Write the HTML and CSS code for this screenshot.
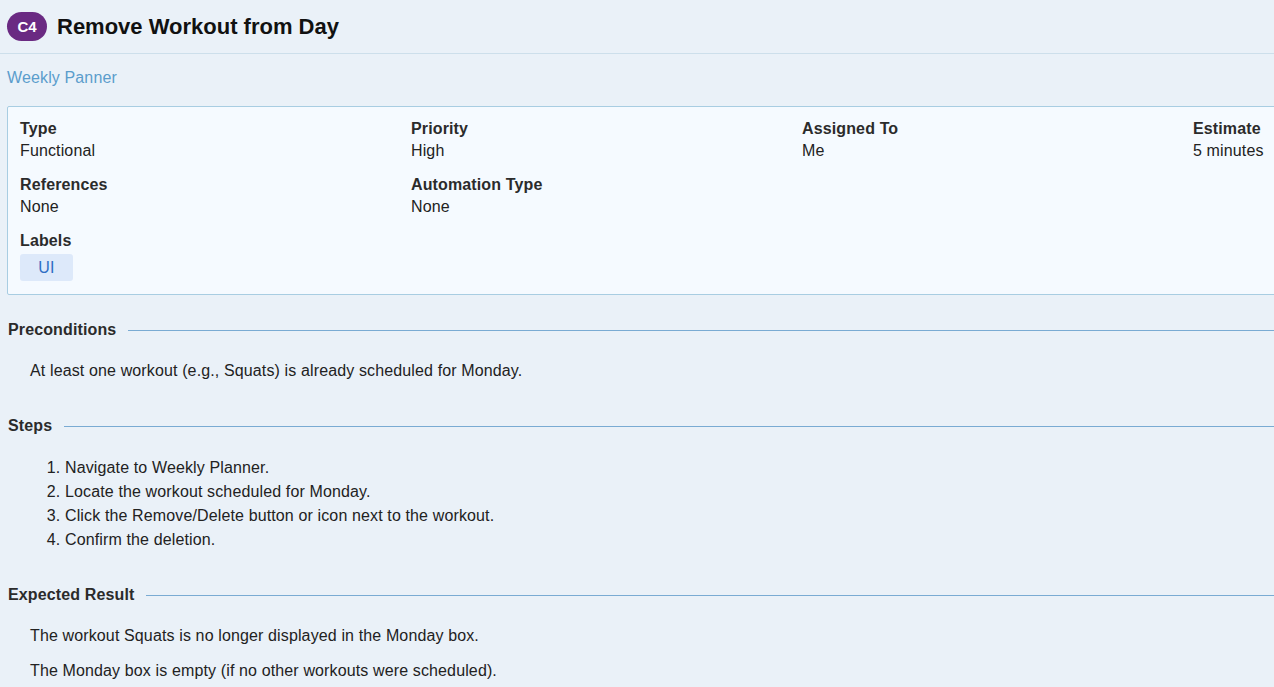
FILE: index.html
```html
<!DOCTYPE html>
<html>
<head>
<meta charset="utf-8">
<link rel="stylesheet" href="styles.css">
</head>
<body>
<div class="page">
  <header class="header">
    <span class="badge">C4</span>
    <h1 class="title">Remove Workout from Day</h1>
  </header>
  <div class="crumb">Weekly Panner</div>
  <div class="info">
    <div class="field"><div class="label">Type</div><div class="value">Functional</div></div>
    <div class="field"><div class="label">Priority</div><div class="value">High</div></div>
    <div class="field"><div class="label">Assigned To</div><div class="value">Me</div></div>
    <div class="field"><div class="label">Estimate</div><div class="value">5 minutes</div></div>
    <div class="field"><div class="label">References</div><div class="value">None</div></div>
    <div class="field"><div class="label">Automation Type</div><div class="value">None</div></div>
    <div class="field"></div>
    <div class="field"></div>
    <div class="field"><div class="label">Labels</div><div class="tags"><span class="tag">UI</span></div></div>
  </div>

  <section class="section">
    <h2 class="sec-title"><span>Preconditions</span></h2>
    <p class="para">At least one workout (e.g., Squats) is already scheduled for Monday.</p>
  </section>

  <section class="section">
    <h2 class="sec-title"><span>Steps</span></h2>
    <ol class="steps">
      <li>Navigate to Weekly Planner.</li>
      <li>Locate the workout scheduled for Monday.</li>
      <li>Click the Remove/Delete button or icon next to the workout.</li>
      <li>Confirm the deletion.</li>
    </ol>
  </section>

  <section class="section">
    <h2 class="sec-title"><span>Expected Result</span></h2>
    <p class="para">The workout Squats is no longer displayed in the Monday box.</p>
    <p class="para">The Monday box is empty (if no other workouts were scheduled).</p>
  </section>
</div>
</body>
</html>
```

FILE: styles.css
```css
html, body {
  margin: 0;
  padding: 0;
  overflow: hidden;
  background: #eaf1f8;
}
body {
  font-family: "Liberation Sans", Arial, sans-serif;
  font-size: 16px;
  color: #222;
  letter-spacing: 0.13px;
}
.page {
  width: 1600px;
}
.header {
  display: flex;
  align-items: center;
  gap: 10px;
  padding: 12px 7px 12px;
  border-bottom: 1px solid #cddfeb;
}
.badge {
  display: inline-flex;
  align-items: center;
  justify-content: center;
  width: 40px;
  height: 29px;
  border-radius: 15px;
  background: #6a2a82;
  color: #fff;
  font-weight: bold;
  font-size: 15px;
  letter-spacing: 0;
}
.title {
  margin: 0;
  font-size: 22px;
  font-weight: bold;
  color: #111;
  letter-spacing: 0;
}
.crumb {
  padding: 15px 7px 0;
  line-height: 18px;
  color: #5b9dcc;
}
.info {
  margin: 19px 7px 0;
  padding: 11px 12px 13px;
  background: #f5faff;
  border: 1px solid #a8cde2;
  border-radius: 2px;
  display: grid;
  grid-template-columns: repeat(4, 391px);
  row-gap: 12px;
}
.label {
  font-weight: bold;
  color: #2b2b2b;
  line-height: 22px;
}
.value {
  line-height: 22px;
  color: #222;
}
.tags {
  margin-top: 2px;
}
.tag {
  display: inline-block;
  width: 53px;
  height: 27px;
  line-height: 27px;
  text-align: center;
  background: #dde9fa;
  color: #2f6ec4;
  border-radius: 3px;
}
.section {
  padding: 0 0 0 8px;
}
.sec-title {
  margin: 25px 0 0;
  display: flex;
  align-items: center;
  gap: 12px;
  font-size: 16px;
  font-weight: bold;
  color: #2b2b2b;
  line-height: 20px;
}
.section + .section .sec-title {
  margin-top: 35px;
}
.section:last-child .sec-title {
  margin-top: 33px;
}
.sec-title::after {
  content: "";
  flex: 1;
  height: 1px;
  background: #7aabd3;
}
.para {
  margin: 21px 0 0 22px;
  line-height: 20px;
  color: #222;
}
.para + .para {
  margin-top: 15px;
}
.steps {
  margin: 20px 0 0;
  padding-left: 57px;
  line-height: 24px;
  color: #222;
}
```
